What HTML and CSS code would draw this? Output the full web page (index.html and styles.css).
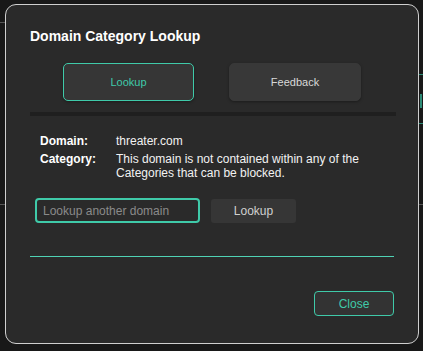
FILE: index.html
```html
<!DOCTYPE html>
<html lang="en">
<head>
  <meta charset="UTF-8" />
  <meta name="viewport" content="width=device-width, initial-scale=1" />
  <title>Domain Category Lookup</title>
  <link rel="stylesheet" href="styles.css">
</head>
<body>
  <div class="modal">
    <h2 class="modal-title">Domain Category Lookup</h2>

    <div class="tabs">
      <button class="tab active">Lookup</button>
      <button class="tab">Feedback</button>
    </div>
    <div class="tab-bar"></div>

    <div class="info">
      <div class="info-row">
        <span class="label">Domain:</span>
        <span class="value">threater.com</span>
      </div>
      <div class="info-row">
        <span class="label">Category:</span>
        <span class="value">This domain is not contained within any of the Categories that can be blocked.</span>
      </div>
    </div>

    <div class="lookup-row">
      <input type="text" class="lookup-input" placeholder="Lookup another domain">
      <button class="lookup-btn">Lookup</button>
    </div>

    <hr class="divider">

    <div class="footer">
      <button class="close-btn">Close</button>
    </div>
  </div>
</body>
</html>
```

FILE: styles.css
```css
html {
  background-color: #181818;
  /* faint bits of the page behind the overlay */
  background-image:
    linear-gradient(#555, #555),
    linear-gradient(#555, #555),
    linear-gradient(#2e8c77, #2e8c77),
    linear-gradient(#2e8c77, #2e8c77),
    linear-gradient(#2e8c77, #2e8c77),
    linear-gradient(#555, #555);
  background-size: 5px 1px, 5px 1px, 4px 1px, 4px 1px, 2px 14px, 4px 1px;
  background-position: 0 22px, 0 204px, 419px 74px, 419px 123px, 420px 94px, 419px 204px;
  background-repeat: no-repeat;
}
body {
  font-family: 'Liberation Sans', Arial, Helvetica, sans-serif;
  margin: 0;
  padding: 4px 0 0 5px;
  color: #f2f2f2;
}
.modal {
  width: 412px;
  height: 338px;
  background: #2a2a2a;
  border: 1px solid #cfcfcf;
  border-radius: 11px;
  display: flex;
  flex-direction: column;
}
.modal-title {
  margin: 23px 0 0 24px;
  font-size: 14px;
  line-height: 16px;
  font-weight: bold;
  color: #ffffff;
}
.tabs {
  display: flex;
  gap: 35px;
  margin: 19px 0 0 57px;
}
.tab {
  width: 132px;
  height: 38px;
  background: #383838;
  border: 1px solid #383838;
  border-radius: 5px;
  color: #d8d8d8;
  font-family: inherit;
  font-size: 11px;
  box-shadow: 0 1px 3px rgba(0,0,0,0.35);
  padding: 0;
}
.tab.active {
  width: 131px;
  background: #363636;
  border-color: #3fcaa9;
  color: #3fcaa9;
}
.tab-bar {
  height: 4px;
  background: #1f1f1f;
  margin: 11px 22px 0 24px;
}
.info {
  margin: 18px 0 0 34px;
  font-size: 12px;
  line-height: 14px;
}
.info-row {
  display: flex;
  margin-bottom: 4px;
}
.label {
  width: 76px;
  flex-shrink: 0;
  font-weight: bold;
  color: #ffffff;
}
.value {
  width: 250px;
  color: #f2f2f2;
}
.lookup-row {
  display: flex;
  align-items: center;
  gap: 11px;
  margin: 14px 0 0 29px;
}
.lookup-input {
  width: 165px;
  height: 25px;
  box-sizing: border-box;
  background: #2a2a2a;
  border: 2px solid #3fcaa9;
  border-radius: 4px;
  padding: 0 6px;
  font-family: inherit;
  font-size: 12px;
  color: #eee;
  outline: none;
}
.lookup-input::placeholder {
  color: #8a8a8a;
}
.lookup-btn {
  width: 85px;
  height: 24px;
  margin-top: 1px;
  background: #363636;
  border: none;
  border-radius: 3px;
  color: #d0d0d0;
  font-family: inherit;
  font-size: 12px;
  padding: 0;
}
.divider {
  border: none;
  height: 1px;
  background: #4fd2b4;
  margin: 33px 24px 0 24px;
}
.footer {
  display: flex;
  justify-content: flex-end;
  margin: 34px 24px 0 0;
}
.close-btn {
  width: 80px;
  height: 25px;
  background: #333333;
  border: 1px solid #3fcaa9;
  border-radius: 4px;
  color: #3fcaa9;
  font-family: inherit;
  font-size: 12px;
  padding: 0;
}
```
